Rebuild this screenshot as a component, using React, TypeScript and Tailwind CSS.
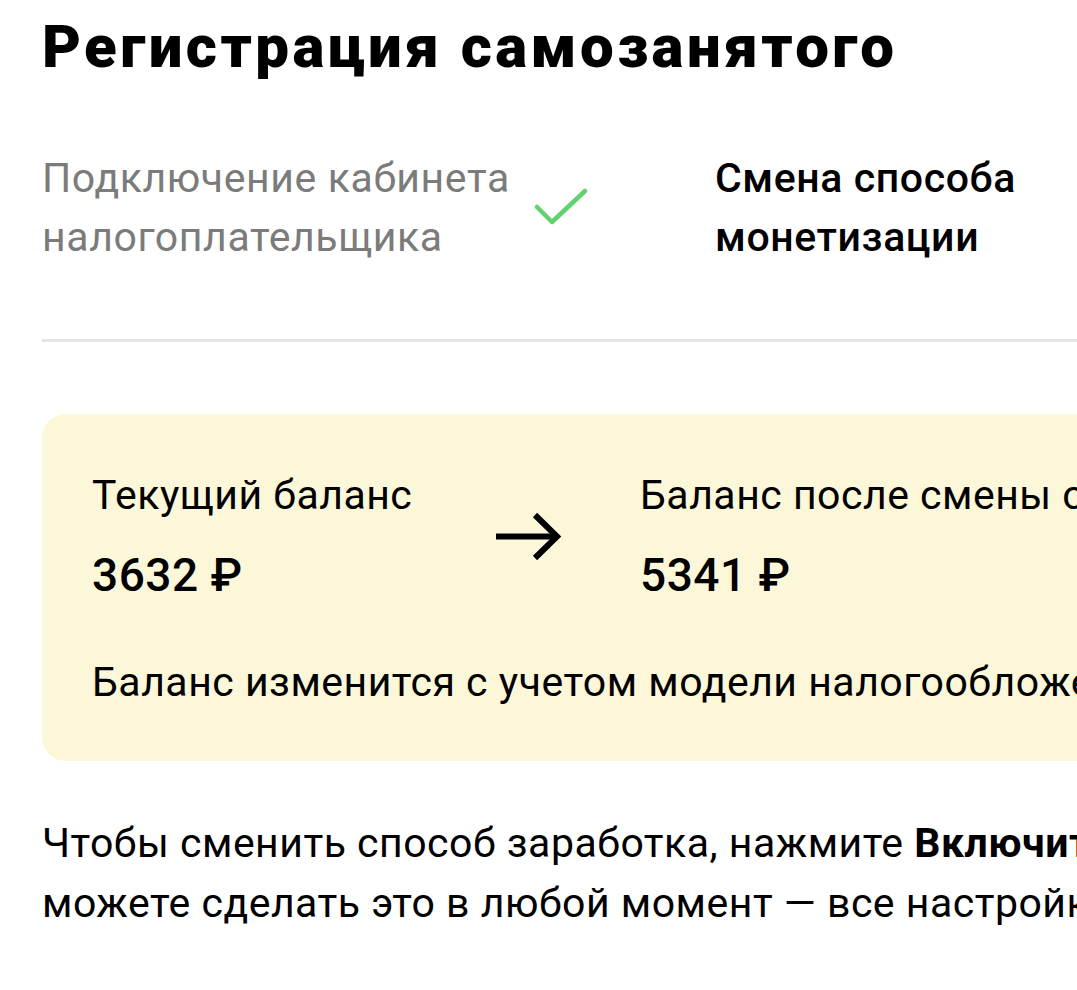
import React from "react";

export default function App() {
  return (
    <div
      className="relative h-[990px] w-[1077px] overflow-hidden bg-white text-black"
      style={{ fontFamily: "Roboto, 'Noto Sans', sans-serif" }}
    >
      <div className="w-[1300px] pl-[42px]">
        <h1 className="mt-[15px] whitespace-nowrap text-[60px] font-black leading-[64px] tracking-[3.4px]">
          Регистрация самозанятого
        </h1>

        <div className="mt-[70px] flex items-center">
          <div className="w-[472px] shrink-0 text-[41px] leading-[59px] tracking-[0.6px] text-[#7b7b7b]">
            <div className="whitespace-nowrap">Подключение кабинета</div>
            <div className="whitespace-nowrap">налогоплательщика</div>
          </div>
          <svg className="ml-[20px] h-[40px] w-[54px] shrink-0" viewBox="0 0 54 40" fill="none">
            <path
              d="M3 19 L18 34 L51 3"
              stroke="#62d170"
              strokeWidth="4.5"
              strokeLinecap="round"
              strokeLinejoin="round"
            />
          </svg>
          <div className="ml-[127px] shrink-0 text-[41px] font-medium leading-[59px] tracking-[0.6px] text-black">
            <div className="whitespace-nowrap">Смена способа</div>
            <div className="whitespace-nowrap">монетизации</div>
          </div>
        </div>

        <div className="mt-[72px] h-[3px] w-full bg-[#e6e6e6]" />

        <div className="mt-[72px] rounded-[24px] bg-[#fcf7d8] pb-[55px] pl-[50px] pt-[57px]">
          <div className="flex items-center">
            <div className="w-[403px] shrink-0">
              <div className="whitespace-nowrap text-[41px] leading-[48px] tracking-[0.5px]">Текущий баланс</div>
              <div className="mt-[30px] whitespace-nowrap text-[46px] font-medium leading-[52px] tracking-[0.5px]">
                3632 ₽
              </div>
            </div>
            <svg className="h-[49px] w-[68px] shrink-0" viewBox="0 0 68 49" fill="none">
              <path d="M1 24.5 H62" stroke="#000" strokeWidth="6" />
              <path
                d="M40 3 L62 24.5 L40 46"
                stroke="#000"
                strokeWidth="6"
                strokeLinejoin="miter"
              />
            </svg>
            <div className="ml-[77px] shrink-0">
              <div className="whitespace-nowrap text-[41px] leading-[48px] tracking-[0.5px]">
                Баланс после смены способа
              </div>
              <div className="mt-[30px] whitespace-nowrap text-[46px] font-medium leading-[52px] tracking-[0.5px]">
                5341 ₽
              </div>
            </div>
          </div>
          <div className="mt-[57px] whitespace-nowrap text-[41px] leading-[48px] tracking-[0.5px]">
            Баланс изменится с учетом модели налогообложения
          </div>
        </div>

        <div className="mt-[52px] text-[41px] leading-[60px] tracking-[0.5px]">
          <div className="whitespace-nowrap">
            Чтобы сменить способ заработка, нажмите <span className="font-bold">Включить</span>. Вы
          </div>
          <div className="whitespace-nowrap">можете сделать это в любой момент — все настройки сохранятся.</div>
        </div>
      </div>
    </div>
  );
}
